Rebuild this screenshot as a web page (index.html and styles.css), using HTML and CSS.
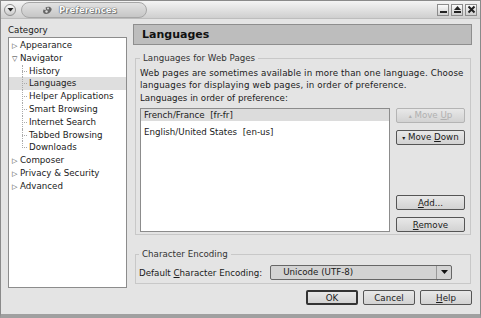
FILE: index.html
```html
<!DOCTYPE html>
<html lang="en">
  <head>
    <meta charset="UTF-8" />
    <title>Preferences</title>
    <link rel="stylesheet" href="styles.css">
  </head>
  <body>
    <div class="window">
      <div class="titlebar">
        <span class="menu-btn">
          <svg width="9" height="9" viewBox="0 0 9 9"><path d="M1.5 3h6L4.5 6.5z" fill="#222"/></svg>
        </span>
        <div class="title-tab">
          <svg class="paw" width="12" height="10" viewBox="0 0 12 10">
            <path d="M2 6c1-3 4-5 7-4 2 1 2 3 1 4-1 2-3 3-5 3-2 0-3-1-3-3z" fill="#666"/>
            <circle cx="4" cy="4" r="1" fill="#ddd"/><circle cx="7" cy="3.5" r="1" fill="#ddd"/><circle cx="5.5" cy="6.5" r="1.2" fill="#ddd"/>
          </svg>
          <span>Preferences</span>
        </div>
        <div class="win-btns">
          <span class="wbtn"><svg width="9" height="9" viewBox="0 0 9 9"><rect x="1" y="6" width="7" height="2" fill="#222"/></svg></span>
          <span class="wbtn"><svg width="9" height="9" viewBox="0 0 9 9"><path d="M4.5 1L8 5H1z" fill="#222"/><rect x="1" y="6" width="7" height="2" fill="#222"/></svg></span>
          <span class="wbtn"><svg width="9" height="9" viewBox="0 0 9 9"><path d="M1.5 1.5l6 6M7.5 1.5l-6 6" stroke="#222" stroke-width="2"/></svg></span>
        </div>
      </div>

      <div class="content">
        <div class="sidebar">
          <div class="cat-label">Category</div>
          <div class="tree">
            <div class="node"><span class="twisty">&#9655;</span>Appearance</div>
            <div class="node"><span class="twisty open">&#9661;</span>Navigator</div>
            <div class="child">History</div>
            <div class="child selected">Languages</div>
            <div class="child">Helper Applications</div>
            <div class="child">Smart Browsing</div>
            <div class="child">Internet Search</div>
            <div class="child">Tabbed Browsing</div>
            <div class="child last">Downloads</div>
            <div class="node"><span class="twisty">&#9655;</span>Composer</div>
            <div class="node"><span class="twisty">&#9655;</span>Privacy &amp; Security</div>
            <div class="node"><span class="twisty">&#9655;</span>Advanced</div>
          </div>
        </div>

        <div class="main">
          <div class="page-header">Languages</div>

          <fieldset class="group group-langs">
            <legend>Languages for Web Pages</legend>
            <p class="desc wide">Web pages are sometimes available in more than one language. Choose<br>languages for displaying web pages, in order of preference.</p>
            <p class="desc">Languages in order of preference:</p>
            <div class="lang-row">
              <div class="lang-list">
                <div class="lang selected">French/France&nbsp; [fr-fr]</div>
                <div class="lang">English/United States&nbsp; [en-us]</div>
              </div>
              <div class="lang-btns">
                <button class="btn disabled"><span class="arr">&#9652;</span> Move <u>U</u>p</button>
                <button class="btn"><span class="arr">&#9662;</span> Move <u>D</u>own</button>
                <div class="spacer"></div>
                <button class="btn"><u>A</u>dd...</button>
                <button class="btn"><u>R</u>emove</button>
              </div>
            </div>
          </fieldset>

          <fieldset class="group group-enc">
            <legend>Character Encoding</legend>
            <div class="enc-row">
              <span>Default <u>C</u>haracter Encoding:</span>
              <div class="select">
                <span class="select-val">Unicode (UTF-8)</span>
                <span class="select-arrow"><svg width="7" height="5" viewBox="0 0 7 5"><path d="M0 0h7L3.5 4z" fill="#111"/></svg></span>
              </div>
            </div>
          </fieldset>

          <div class="dialog-btns">
            <button class="btn default">OK</button>
            <button class="btn">Cancel</button>
            <button class="btn"><u>H</u>elp</button>
          </div>
        </div>
      </div>
    </div>
  </body>
</html>
```

FILE: styles.css
```css
* {
  box-sizing: border-box;
  margin: 0;
  padding: 0;
}
body {
  font-family: "DejaVu Sans", sans-serif;
  font-size: 8.7px;
  color: #1a1a1a;
  background: #fff;
}
.window {
  width: 481px;
  height: 318px;
  background: #e4e4e4;
  border: 1px solid #8a8a8a;
  border-bottom: 4px solid #a0a0a0;
  display: flex;
  flex-direction: column;
}

/* title bar */
.titlebar {
  height: 18px;
  display: flex;
  align-items: center;
  padding: 0 3px 0 3px;
  background: linear-gradient(#f4f4f4, #cfcfcf);
  border-bottom: 1px solid #bdbdbd;
}
.menu-btn {
  width: 12px;
  height: 12px;
  border-radius: 50%;
  background: linear-gradient(#fafafa, #c9c9c9);
  border: 1px solid #8f8f8f;
  display: flex;
  align-items: center;
  justify-content: center;
}
.title-tab {
  margin-left: 5px;
  width: 126px;
  height: 16px;
  border: 1px solid #a6a6a6;
  border-radius: 8px;
  background: linear-gradient(#e2e2e2, #c6c6c6);
  display: flex;
  align-items: center;
  padding-left: 19px;
  gap: 6px;
  color: #fbfbfb;
  font-weight: bold;
  font-size: 8.5px;
  text-shadow: 0 0 1px #555, 0 0 1px #555, 1px 1px 0 #888;
}
.win-btns {
  margin-left: auto;
  display: flex;
  gap: 2px;
}
.wbtn {
  width: 12px;
  height: 12px;
  border: 1px solid #8c8c8c;
  background: linear-gradient(#fafafa, #cfcfcf);
  display: flex;
  align-items: center;
  justify-content: center;
}

/* content */
.content {
  flex: 1;
  display: flex;
  padding: 5px 8px 7px 7px;
  gap: 6px;
}
.sidebar {
  width: 119px;
  flex-shrink: 0;
  display: flex;
  flex-direction: column;
}
.cat-label {
  height: 12px;
  line-height: 12px;
  margin-bottom: 1px;
}
.tree {
  height: 251px;
  background: #fff;
  border: 1px solid #8c8c8c;
  padding-top: 1px;
}
.node, .child {
  height: 12.8px;
  line-height: 12.8px;
  white-space: nowrap;
}
.node {
  padding-left: 3px;
}
.twisty {
  font-size: 7px;
  display: inline-block;
  width: 7px;
  margin-right: 1px;
  color: #333;
}
.child {
  padding-left: 20px;
  position: relative;
}
.child::before {
  content: "";
  position: absolute;
  left: 13px;
  top: 0;
  height: 100%;
  border-left: 1px dotted #aaa;
}
.child::after {
  content: "";
  position: absolute;
  left: 13px;
  top: 6px;
  width: 5px;
  border-top: 1px dotted #aaa;
}
.child.last::before {
  height: 7px;
}
.selected {
  background: #dedede;
}

/* main */
.main {
  flex: 1;
  min-width: 0;
  display: flex;
  flex-direction: column;
}
.page-header {
  height: 21px;
  background: #bdbdbd;
  border: 1px solid #8e8e8e;
  font-weight: bold;
  font-size: 11px;
  padding-left: 8px;
  line-height: 19px;
  color: #111;
}
.group {
  border: 1px solid #c8c8c8;
  margin-left: 2px;
  margin-right: 1px;
  min-width: 0;
}
.group legend {
  padding: 0 3px;
  margin-left: 0;
  color: #333;
}
.group-langs {
  margin-top: 8px;
  height: 182px;
  padding: 4px 5px 4px 4px;
}
.desc {
  line-height: 12px;
  margin-bottom: 1px;
  white-space: nowrap;
}
.desc.wide {
  letter-spacing: 0.12px;
}
.lang-row {
  display: flex;
  gap: 6px;
  margin-top: 4px;
  height: 124px;
}
.lang-list {
  width: 250px;
  background: #fff;
  border: 1px solid #8c8c8c;
}
.lang {
  height: 12px;
  line-height: 12px;
  padding-left: 3px;
  margin-bottom: 5px;
}
.lang.selected {
  background: #dcdcdc;
}
.lang-btns {
  flex: 1;
  display: flex;
  flex-direction: column;
  gap: 7px;
}
.spacer {
  flex: 1;
}
.btn {
  font-family: inherit;
  font-size: 8.7px;
  height: 15px;
  border: 1px solid #555;
  border-radius: 2px;
  background: linear-gradient(#e8e8e8, #d2d2d2);
  color: #1a1a1a;
  text-align: center;
  line-height: 12px;
}
.btn.disabled {
  color: #b0b0b0;
  border-color: #b4b4b4;
}
.arr {
  font-size: 6px;
}
.group-enc {
  margin-top: 14px;
  height: 35px;
  padding: 0 18px 0 3px;
}
.enc-row {
  display: flex;
  align-items: center;
  gap: 8px;
  margin-top: 6px;
}
.select {
  flex: 1;
  height: 15px;
  display: flex;
  border: 1px solid #666;
  border-radius: 2px;
  background: #d3d3d3;
}
.select-val {
  flex: 1;
  padding-left: 12px;
  line-height: 13px;
}
.select-arrow {
  width: 15px;
  border-left: 1px solid #999;
  display: flex;
  align-items: center;
  justify-content: center;
}
.dialog-btns {
  margin-top: 6px;
  display: flex;
  justify-content: flex-end;
  gap: 5px;
}
.dialog-btns .btn {
  width: 52px;
  height: 15px;
}
.btn.default {
  border: 2px solid #333;
}
```
